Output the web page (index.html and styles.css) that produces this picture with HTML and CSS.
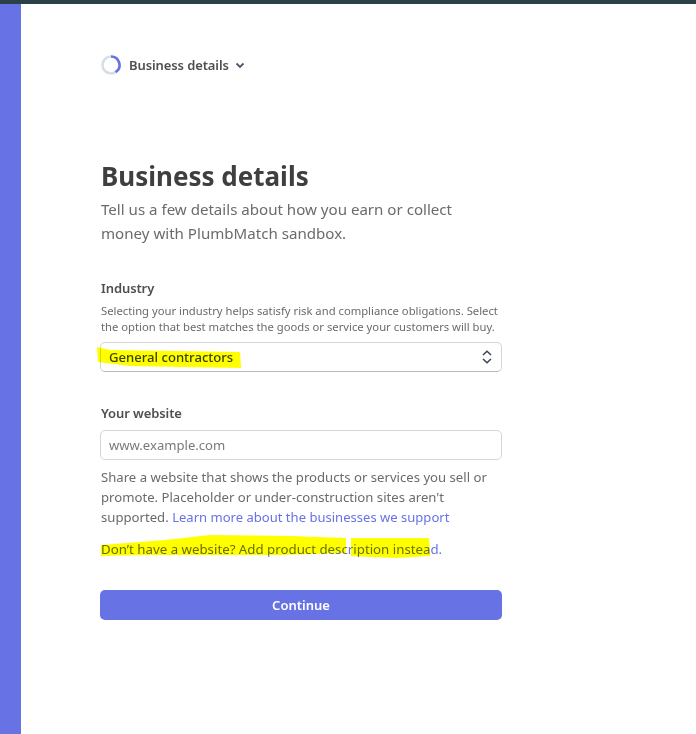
FILE: index.html
```html
<!DOCTYPE html>
<html lang="en">
<head>
  <meta charset="UTF-8" />
  <title>Business details</title>
  <link rel="stylesheet" href="styles.css">
</head>
<body>

<div class="topbar"></div>

<div class="page">
  <div class="sidebar"></div>

  <main class="content">
    <div class="step">
      <svg class="spinner" width="20" height="20" viewBox="0 0 20 20">
        <circle cx="10" cy="10" r="8.5" fill="none" stroke="#d5dfe9" stroke-width="2.6"/>
        <path d="M10 1.5A8.5 8.5 0 0 1 14.5 17.2" fill="none" stroke="#6772e5" stroke-width="2.6"/>
      </svg>
      <span class="step-name">Business details</span>
      <svg class="caret" width="10" height="7" viewBox="0 0 10 7">
        <path d="M1.5 1.5L5 5L8.5 1.5" fill="none" stroke="#4f566b" stroke-width="1.8"/>
      </svg>
    </div>

    <h1>Business details</h1>
    <p class="intro">Tell us a few details about how you earn or collect money with PlumbMatch sandbox.</p>

    <section class="field industry">
      <label>Industry</label>
      <p class="hint">Selecting your industry helps satisfy risk and compliance obligations. Select the option that best matches the goods or service your customers will buy.</p>
      <div class="select">
        <span>General contractors</span>
        <svg width="10" height="14" viewBox="0 0 10 14">
          <path d="M1 5L5 1.2L9 5M1 9L5 12.8L9 9" fill="none" stroke="#3c4257" stroke-width="1.5"/>
        </svg>
      </div>
    </section>

    <section class="field website">
      <label>Your website</label>
      <div class="input">www.example.com</div>
      <p class="help">Share a website that shows the products or services you sell or promote. Placeholder or under-construction sites aren't supported. <a href="#">Learn more about the businesses we support</a></p>
      <p class="help alt">Don’t have a website? <a href="#">Add product description instead.</a></p>
    </section>

    <button class="continue">Continue</button>
  </main>
</div>

<!-- marker strokes drawn on top of the screenshot -->
<svg class="marker" width="696" height="734" viewBox="0 0 696 734">
  <path d="M97 347L110 350L240 352L241 368L180 367L130 366L98 362Z" fill="#ffff00"/>
  <path d="M101 545L165 540L210 535L290 536L346 538L346 553L280 555L200 555L150 555L101 556Z" fill="#ffff00"/>
  <path d="M351 538L429 538L430 556L395 558L351 556Z" fill="#ffff00"/>
</svg>

</body>
</html>
```

FILE: styles.css
```css
* { margin: 0; padding: 0; box-sizing: border-box; }

html, body {
  height: 100%;
  font-family: "Noto Sans", sans-serif;
  background: #fff;
  overflow: hidden;
}

.topbar {
  height: 4px;
  background: #2a4247;
}

.page {
  display: flex;
  height: 730px;
}

.sidebar {
  width: 21px;
  background: #6772e5;
}

.content {
  width: 402px;
  margin-left: 79px;
  color: #3c4043;
}

.step {
  display: flex;
  align-items: center;
  margin: 51px 0 0 1px;
  height: 20px;
}

.step-name {
  margin-left: 8px;
  font-size: 13px;
  font-weight: 600;
  letter-spacing: -0.1px;
  color: #4f4f4f;
}

.caret {
  margin-left: 6px;
}

h1 {
  margin: 81px 0 0 1px;
  font-size: 26px;
  line-height: 40px;
  font-weight: 700;
  color: #3f3f3f;
}

.intro {
  margin: 1px 0 0 1px;
  width: 370px;
  font-size: 15.1px;
  line-height: 24px;
  color: #6b6b6b;
}

.field label {
  display: block;
  margin-left: 1px;
  font-size: 13px;
  font-weight: 600;
  letter-spacing: -0.1px;
  line-height: 20px;
  color: #4f4f4f;
}

.industry {
  margin-top: 33px;
}

.hint {
  margin: 5px 0 0 1px;
  font-size: 11.25px;
  line-height: 16px;
  color: #6b6b6b;
}

.select, .input {
  display: flex;
  align-items: center;
  justify-content: space-between;
  height: 30px;
  padding: 0 9px 0 8px;
  border: 1px solid #d5d5da;
  border-radius: 5px;
  font-size: 13.1px;
}

.select {
  margin-top: 7px;
  font-weight: 500;
  color: #3c4257;
  border-bottom-color: #b8b8be;
}

.website {
  margin-top: 31px;
}

.input {
  margin-top: 7px;
  color: #7a7a7a;
}

.help {
  margin: 7px 0 0 1px;
  font-size: 13.15px;
  line-height: 20px;
  color: #6b6b6b;
}

.help a {
  color: #6772e5;
  font-size: 13.05px;
  text-decoration: none;
}

.alt {
  margin-top: 12px;
  font-size: 13.27px;
}

.alt a {
  font-size: 13.27px;
}

.continue {
  display: block;
  width: 100%;
  height: 30px;
  margin-top: 31px;
  background: #6772e5;
  color: #fff;
  font-family: inherit;
  font-size: 13px;
  font-weight: 600;
  border: none;
  border-radius: 5px;
}

.marker {
  position: absolute;
  top: 0;
  left: 0;
  mix-blend-mode: multiply;
  pointer-events: none;
}
```
